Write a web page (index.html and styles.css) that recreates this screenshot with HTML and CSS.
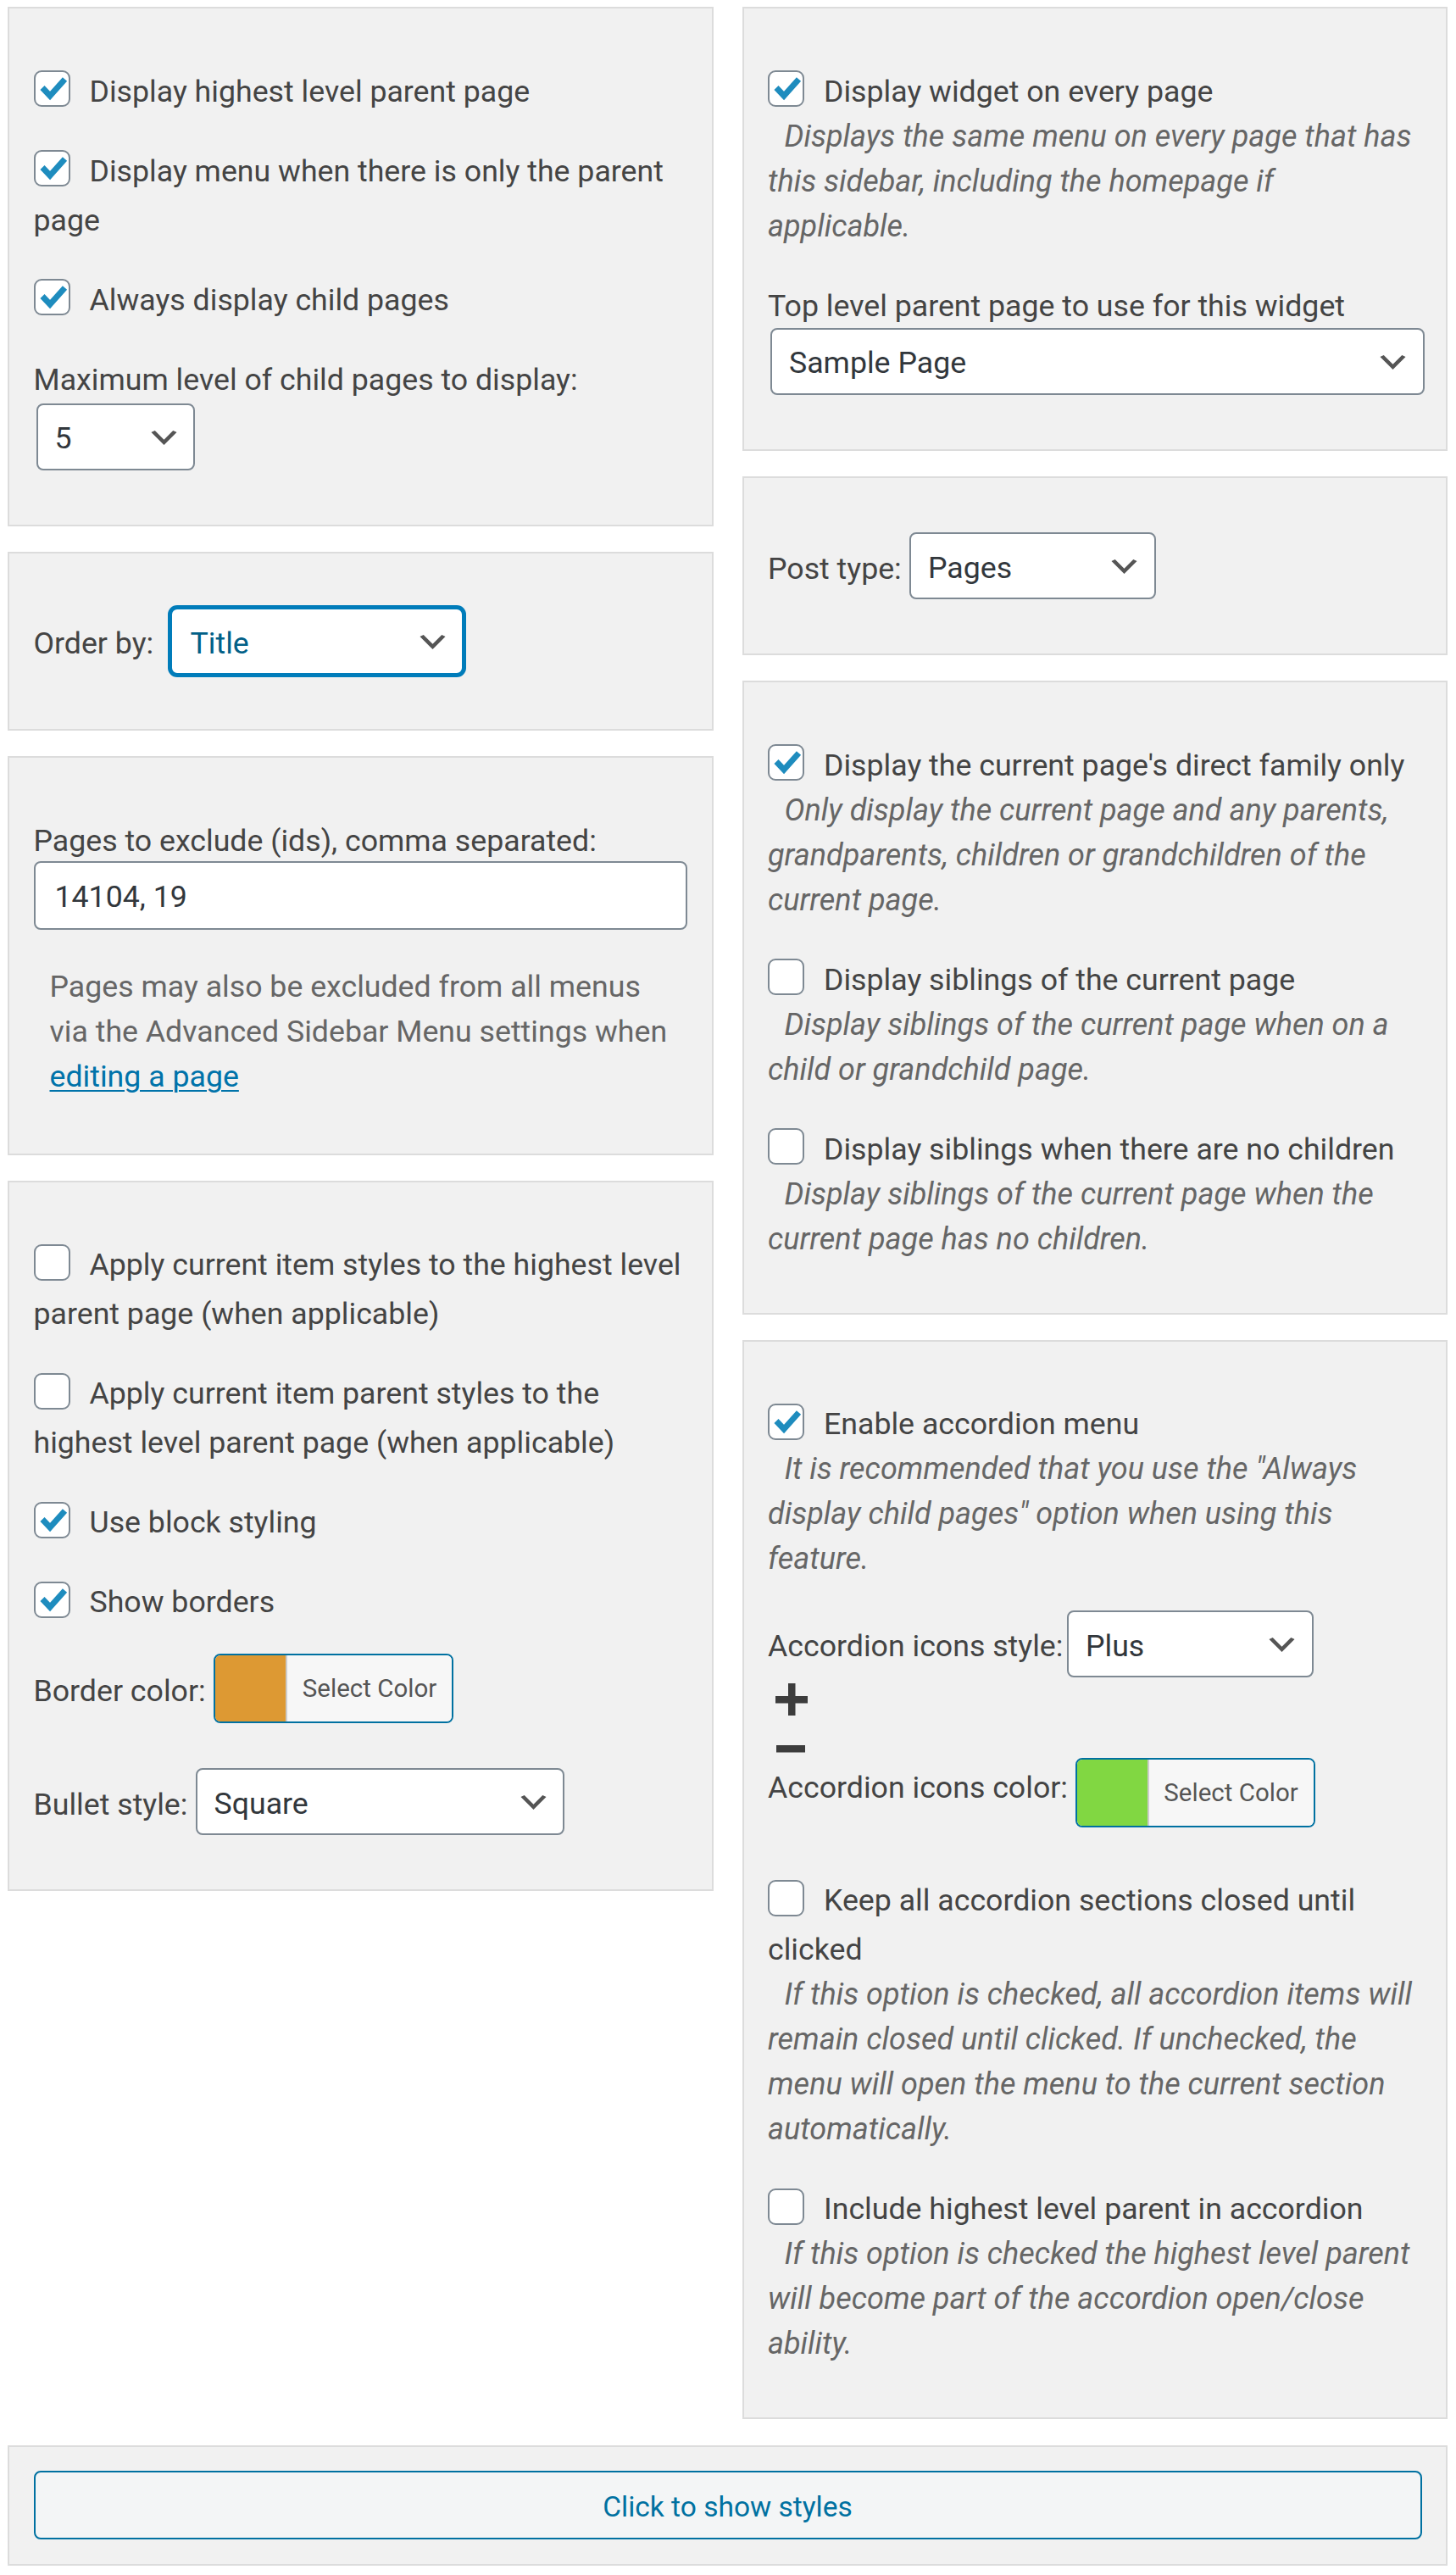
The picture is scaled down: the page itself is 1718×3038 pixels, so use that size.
FILE: index.html
```html
<!DOCTYPE html>
<html lang="en">
<head>
<meta charset="utf-8">
<title>Advanced Sidebar Menu widget</title>
<link rel="stylesheet" href="styles.css">
</head>
<body>
<div class="page">
  <div class="cols">
    <div class="col">

      <div class="panel">
        <div class="field txt"><span class="cb on"><svg viewBox="2 2 39 39"><path d="M10 20.5 L19 30 L36.5 10.5"/></svg></span>Display highest level parent page</div>
        <div class="field txt nw"><span class="cb on"><svg viewBox="2 2 39 39"><path d="M10 20.5 L19 30 L36.5 10.5"/></svg></span>Display menu when there is only the parent<br>page</div>
        <div class="field txt"><span class="cb on"><svg viewBox="2 2 39 39"><path d="M10 20.5 L19 30 L36.5 10.5"/></svg></span>Always display child pages</div>
        <div class="field">
          <div class="lbl-line">Maximum level of child pages to display:</div>
          <div class="select block-select sel-level"><span>5</span><svg class="chev" viewBox="0 0 20 20"><path d="M5 6l5 5 5-5 2 1-7 7-7-7 2-1z"/></svg></div>
        </div>
      </div>

      <div class="panel">
        <div class="row"><span class="lbl w-order">Order by:</span><div class="select focus sel-order"><span>Title</span><svg class="chev" viewBox="0 0 20 20"><path d="M5 6l5 5 5-5 2 1-7 7-7-7 2-1z"/></svg></div></div>
      </div>

      <div class="panel">
        <div class="field">
          <div class="lbl-line">Pages to exclude (ids), comma separated:</div>
          <div class="input">14104, 19</div>
        </div>
        <div class="help">Pages may also be excluded from all menus<br>via the Advanced Sidebar Menu settings when<br><a href="#">editing a page</a></div>
      </div>

      <div class="panel">
        <div class="field txt nw"><span class="cb"></span>Apply current item styles to the highest level<br>parent page (when applicable)</div>
        <div class="field txt nw"><span class="cb"></span>Apply current item parent styles to the<br>highest level parent page (when applicable)</div>
        <div class="field txt"><span class="cb on"><svg viewBox="2 2 39 39"><path d="M10 20.5 L19 30 L36.5 10.5"/></svg></span>Use block styling</div>
        <div class="field txt"><span class="cb on"><svg viewBox="2 2 39 39"><path d="M10 20.5 L19 30 L36.5 10.5"/></svg></span>Show borders</div>
        <div class="row colorrow"><span class="lbl w-border">Border color:</span><div class="color-btn"><span class="swatch" style="background:#dd9933"></span><span class="color-text">Select Color</span></div></div>
        <div class="row"><span class="lbl w-bullet">Bullet style:</span><div class="select sel-bullet"><span>Square</span><svg class="chev" viewBox="0 0 20 20"><path d="M5 6l5 5 5-5 2 1-7 7-7-7 2-1z"/></svg></div></div>
      </div>

    </div>
    <div class="col">

      <div class="panel">
        <div class="field txt has-desc">
          <div><span class="cb on"><svg viewBox="2 2 39 39"><path d="M10 20.5 L19 30 L36.5 10.5"/></svg></span>Display widget on every page</div>
          <div class="desc">Displays the same menu on every page that has<br>this sidebar, including the homepage if<br>applicable.</div>
        </div>
        <div class="field">
          <div class="lbl-line">Top level parent page to use for this widget</div>
          <div class="select block-select sel-wide"><span>Sample Page</span><svg class="chev" viewBox="0 0 20 20"><path d="M5 6l5 5 5-5 2 1-7 7-7-7 2-1z"/></svg></div>
        </div>
      </div>

      <div class="panel">
        <div class="row"><span class="lbl w-type">Post type:</span><div class="select sel-type"><span>Pages</span><svg class="chev" viewBox="0 0 20 20"><path d="M5 6l5 5 5-5 2 1-7 7-7-7 2-1z"/></svg></div></div>
      </div>

      <div class="panel">
        <div class="field txt has-desc">
          <div><span class="cb on"><svg viewBox="2 2 39 39"><path d="M10 20.5 L19 30 L36.5 10.5"/></svg></span>Display the current page's direct family only</div>
          <div class="desc">Only display the current page and any parents,<br>grandparents, children or grandchildren of the<br>current page.</div>
        </div>
        <div class="field txt has-desc">
          <div><span class="cb"></span>Display siblings of the current page</div>
          <div class="desc">Display siblings of the current page when on a<br>child or grandchild page.</div>
        </div>
        <div class="field txt has-desc">
          <div><span class="cb"></span>Display siblings when there are no children</div>
          <div class="desc">Display siblings of the current page when the<br>current page has no children.</div>
        </div>
      </div>

      <div class="panel">
        <div class="field txt has-desc">
          <div><span class="cb on"><svg viewBox="2 2 39 39"><path d="M10 20.5 L19 30 L36.5 10.5"/></svg></span>Enable accordion menu</div>
          <div class="desc">It is recommended that you use the "Always<br>display child pages" option when using this<br>feature.</div>
        </div>
        <div class="row"><span class="lbl w-istyle">Accordion icons style:</span><div class="select sel-icons"><span>Plus</span><svg class="chev" viewBox="0 0 20 20"><path d="M5 6l5 5 5-5 2 1-7 7-7-7 2-1z"/></svg></div></div>
        <div class="icons">
          <svg class="ic-plus" viewBox="0 0 38 38"><rect x="15" y="0" width="8.5" height="38"/><rect x="0" y="15" width="38" height="8.5"/></svg>
          <svg class="ic-minus" viewBox="0 0 34 10"><rect x="0" y="1" width="34" height="8.5"/></svg>
        </div>
        <div class="row colorrow"><span class="lbl w-icolor">Accordion icons color:</span><div class="color-btn"><span class="swatch" style="background:#81d742"></span><span class="color-text">Select Color</span></div></div>
        <div class="field txt has-desc">
          <div class="nw"><span class="cb"></span>Keep all accordion sections closed until<br>clicked</div>
          <div class="desc">If this option is checked, all accordion items will<br>remain closed until clicked. If unchecked, the<br>menu will open the menu to the current section<br>automatically.</div>
        </div>
        <div class="field txt has-desc">
          <div><span class="cb"></span>Include highest level parent in accordion</div>
          <div class="desc">If this option is checked the highest level parent<br>will become part of the accordion open/close<br>ability.</div>
        </div>
      </div>

    </div>
  </div>

  <div class="panel bottom">
    <div class="wide-btn">Click to show styles</div>
  </div>
</div>
</body>
</html>
```

FILE: styles.css
```css
html, body {
  margin: 0;
  padding: 0;
  background: #ffffff;
}

body {
  font-family: Roboto, "Liberation Sans", sans-serif;
  font-size: 35.7px;
  line-height: 58px;
  color: #444444;
}

.page {
  padding: 8px 10px 0 9px;
}

.cols {
  display: flex;
  gap: 34px;
  align-items: flex-start;
}

.col {
  flex: 1 1 0;
  min-width: 0;
  display: flex;
  flex-direction: column;
  gap: 30px;
}

.panel {
  display: flex;
  flex-direction: column;
  background: #f1f1f1;
  border: 2px solid #dcdcdc;
  padding: 64.5px 28.5px 64px;
}

.panel > * {
  margin: 0;
}

.panel > * + * {
  margin-top: 36px;
}

/* text-only fields: nudge glyphs down without moving the layout */
.panel > .field.txt {
  padding-top: 4px;
  margin-bottom: -4px;
}

.lbl-line {
  padding-top: 4px;
}

.panel > .field.has-desc + * {
  margin-top: 38px;
}

.panel > .colorrow + * {
  margin-top: 53px;
}

.panel > .icons,
.panel > .icons + .colorrow {
  margin-top: 0;
}

.nw {
  white-space: nowrap;
}

/* checkbox */
.cb {
  display: inline-block;
  box-sizing: border-box;
  width: 43px;
  height: 43px;
  border: 2px solid #7e8993;
  border-radius: 9px;
  background: #ffffff;
  vertical-align: top;
  margin: 4.5px 23px 0 0;
}

.cb svg {
  display: block;
  width: 39px;
  height: 39px;
}

.cb svg path {
  fill: none;
  stroke: #1e8cbe;
  stroke-width: 7px;
  stroke-linejoin: miter;
}

/* description */
.desc {
  margin-top: -2px;
  font-style: italic;
  font-size: 36px;
  line-height: 53px;
  color: #666666;
  text-indent: 19.5px;
  white-space: nowrap;
}

/* help text */
.panel > .help {
  margin-top: 37px;
  padding-top: 4px;
  padding-left: 19px;
  line-height: 53px;
  color: #666666;
  white-space: nowrap;
}

.help a {
  color: #0073aa;
  text-decoration: underline;
  text-underline-offset: 4px;
  text-decoration-thickness: 2px;
}

/* select */
.select {
  position: relative;
  display: flex;
  align-items: center;
  box-sizing: border-box;
  height: 79px;
  border: 2px solid #7e8993;
  border-radius: 8px;
  background: #ffffff;
  padding: 0 60px 0 20px;
  color: #32373c;
  flex: none;
}

.select > span {
  padding-top: 4px;
}

.select .chev {
  position: absolute;
  right: 13.5px;
  top: 50%;
  width: 43px;
  height: 43px;
  margin-top: -20.5px;
}

.select .chev path {
  fill: #555555;
}

.select.focus {
  border-color: #007cba;
  box-shadow: 0 0 0 3px #007cba;
  color: #016087;
}

.select.focus > span {
  padding-left: 2px;
}

.block-select {
  margin: -1px 3px 0;
}

.sel-level { width: 187.5px; }
.sel-wide { width: 100%; margin-top: -3px; }
.sel-order { width: 346.5px; }
.sel-type { width: 290.5px; }
.sel-bullet { width: 435.5px; }
.sel-icons { width: 290.5px; }

/* inline label + control rows */
.row {
  display: flex;
  align-items: center;
}

.lbl {
  flex: none;
  padding-top: 6px;
  white-space: nowrap;
}

.w-order { width: 161px; padding-top: 5px; }
.w-type { width: 167px; }
.w-border { width: 212.5px; }
.w-bullet { width: 191px; }
.w-istyle { width: 353px; padding-top: 4px; }
.w-icolor { width: 362.5px; padding-top: 0; padding-bottom: 12px; }

/* input */
.input {
  box-sizing: border-box;
  width: 100%;
  height: 81px;
  margin-top: -5px;
  display: flex;
  align-items: center;
  padding: 4px 23px 0;
  border: 2px solid #7e8993;
  border-radius: 8px;
  background: #ffffff;
  color: #32373c;
}

/* color picker */
.color-btn {
  display: flex;
  box-sizing: border-box;
  width: 283px;
  height: 82px;
  border: 2px solid #0071a1;
  border-radius: 8px;
  overflow: hidden;
  flex: none;
}

.swatch {
  width: 83px;
  flex: none;
}

.color-text {
  flex: 1;
  display: flex;
  align-items: center;
  justify-content: center;
  background: #f7f7f7;
  border-left: 2px solid #cccccc;
  color: #555555;
  font-size: 29.5px;
}

/* accordion icon preview */
.icons {
  display: flex;
  flex-direction: column;
  padding-bottom: 6px;
}

.ic-plus {
  display: block;
  width: 38px;
  height: 38px;
  margin: 7px 0 0 9px;
  fill: #3c3c3c;
}

.ic-minus {
  display: block;
  width: 34px;
  height: 10px;
  margin: 34px 0 0 10px;
  fill: #3c3c3c;
}

/* bottom panel */
.panel.bottom {
  margin-top: 31px;
  padding: 28px 28.5px 29px;
}

.wide-btn {
  box-sizing: border-box;
  height: 81px;
  display: flex;
  align-items: center;
  justify-content: center;
  padding-top: 4px;
  border: 2px solid #0071a1;
  border-radius: 8px;
  background: #f3f5f6;
  color: #0071a1;
  font-size: 33.5px;
}
```
